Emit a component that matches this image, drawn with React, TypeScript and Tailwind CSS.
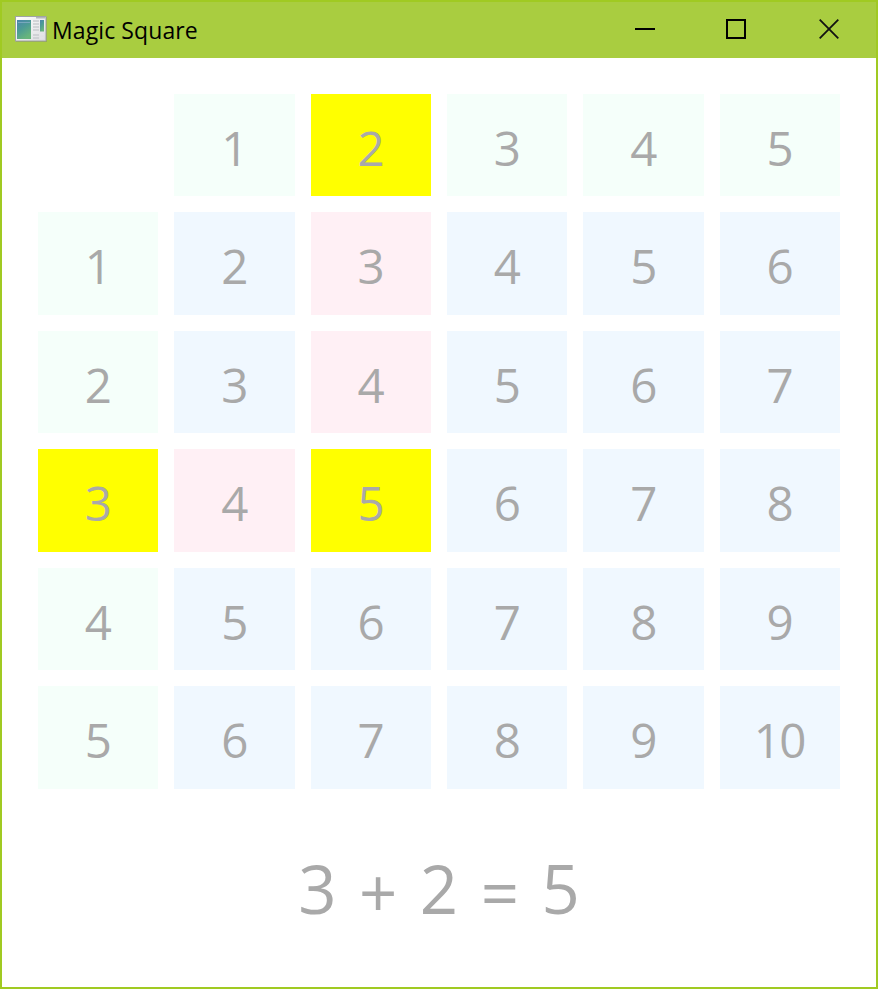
const SIZE = 5;
const SELECTED_ROW = 3;
const SELECTED_COL = 2;

function cellColor(row: number, col: number): string {
  if (row === 0 && col === 0) return 'bg-white';
  const picked =
    (row === 0 && col === SELECTED_COL) ||
    (col === 0 && row === SELECTED_ROW) ||
    (row === SELECTED_ROW && col === SELECTED_COL);
  if (picked) return 'bg-[#ffff00]';
  if (row === 0 || col === 0) return 'bg-[#f5fffa]';
  const onPath =
    (col === SELECTED_COL && row < SELECTED_ROW) ||
    (row === SELECTED_ROW && col < SELECTED_COL);
  return onPath ? 'bg-[#fff0f5]' : 'bg-[#f0f8ff]';
}

function AppIcon() {
  return (
    <svg width="33" height="27" viewBox="0 0 33 27" className="mb-[2px] block">
      <defs>
        <linearGradient id="pane" x1="0" y1="0" x2="0.5" y2="1">
          <stop offset="0" stopColor="#4a83ad" />
          <stop offset="0.5" stopColor="#4c9b95" />
          <stop offset="1" stopColor="#68b57c" />
        </linearGradient>
        <linearGradient id="frame" x1="0" y1="0" x2="1" y2="1">
          <stop offset="0" stopColor="#ffffff" />
          <stop offset="1" stopColor="#dcdce0" />
        </linearGradient>
      </defs>
      <rect x="1" y="1" width="31" height="25" fill="#84963f" opacity="0.6" />
      <rect x="0.5" y="0.5" width="30.5" height="24.5" fill="url(#frame)" stroke="#a0a3a6" />
      <rect x="21" y="1" width="9.5" height="1.5" fill="#b3b6bb" />
      <rect x="2" y="4" width="14" height="19" fill="url(#pane)" />
      <path d="M3 6.5h12" stroke="#78a8bd" />
      <path d="M18 5h6M18 8h6M18 11h6M18 14h6M18 19h6M18 22h6" stroke="#c9cbd0" strokeWidth="1.5" />
      <rect x="25" y="4" width="4" height="11.5" fill="url(#pane)" />
      <path d="M25 18.5h4M25 22h4" stroke="#e4e5e8" />
    </svg>
  );
}

function TitleBar() {
  return (
    <header className="flex h-14 shrink-0 items-center bg-[#a9cd40] pl-[13px]">
      <AppIcon />
      <h1 className="ml-1 flex-1 text-[23px] leading-none tracking-[0.1px] text-black">
        Magic Square
      </h1>
      <div className="flex h-full items-center pr-px">
        <button aria-label="Minimize" className="grid h-full w-[91px] place-items-center pb-[2px]">
          <svg width="20" height="20" viewBox="0 0 20 20" className="block">
            <path d="M0 10h20" stroke="black" strokeWidth="2" />
          </svg>
        </button>
        <button aria-label="Maximize" className="grid h-full w-[92px] place-items-center pb-[2px]">
          <svg width="20" height="20" viewBox="0 0 20 20" className="block">
            <rect x="1" y="1" width="18" height="18" fill="none" stroke="black" strokeWidth="2" />
          </svg>
        </button>
        <button aria-label="Close" className="grid h-full w-[93px] place-items-center pb-[2px]">
          <svg width="20" height="20" viewBox="0 0 20 20" className="block">
            <path d="M0.7 0.7l18.6 18.6M19.3 0.7L0.7 19.3" stroke="#111111" strokeWidth="1.8" />
          </svg>
        </button>
      </div>
    </header>
  );
}

export default function App() {
  const indices = Array.from({ length: SIZE + 1 }, (_, i) => i);
  return (
    <div className="flex h-[989px] w-[878px] flex-col border-2 border-[#a0ca22] bg-white font-['Open_Sans','Noto_Sans',sans-serif]">
      <TitleBar />
      <main className="flex flex-1 flex-col px-9 pt-9">
        <div className="grid h-[694.7px] w-[802px] grid-cols-6 grid-rows-6 gap-4">
          {indices.map((row) =>
            indices.map((col) => (
              <div
                key={`${row}-${col}`}
                className={`flex items-center justify-center pt-[5px] pr-px text-[47.5px] leading-none tracking-[-1.5px] text-[#a9a9a9] ${cellColor(row, col)}`}
              >
                {row + col > 0 ? row + col : ''}
              </div>
            )),
          )}
        </div>
        <div className="flex flex-1 items-center justify-center pt-[2px]">
          <p className="text-[67px] leading-none text-[#a9a9a9] [word-spacing:5.1px]">
            {SELECTED_ROW} <span className="inline-block translate-y-1">+</span> {SELECTED_COL}{' '}
            <span className="inline-block translate-y-1">=</span> {SELECTED_ROW + SELECTED_COL}
          </p>
        </div>
      </main>
    </div>
  );
}
